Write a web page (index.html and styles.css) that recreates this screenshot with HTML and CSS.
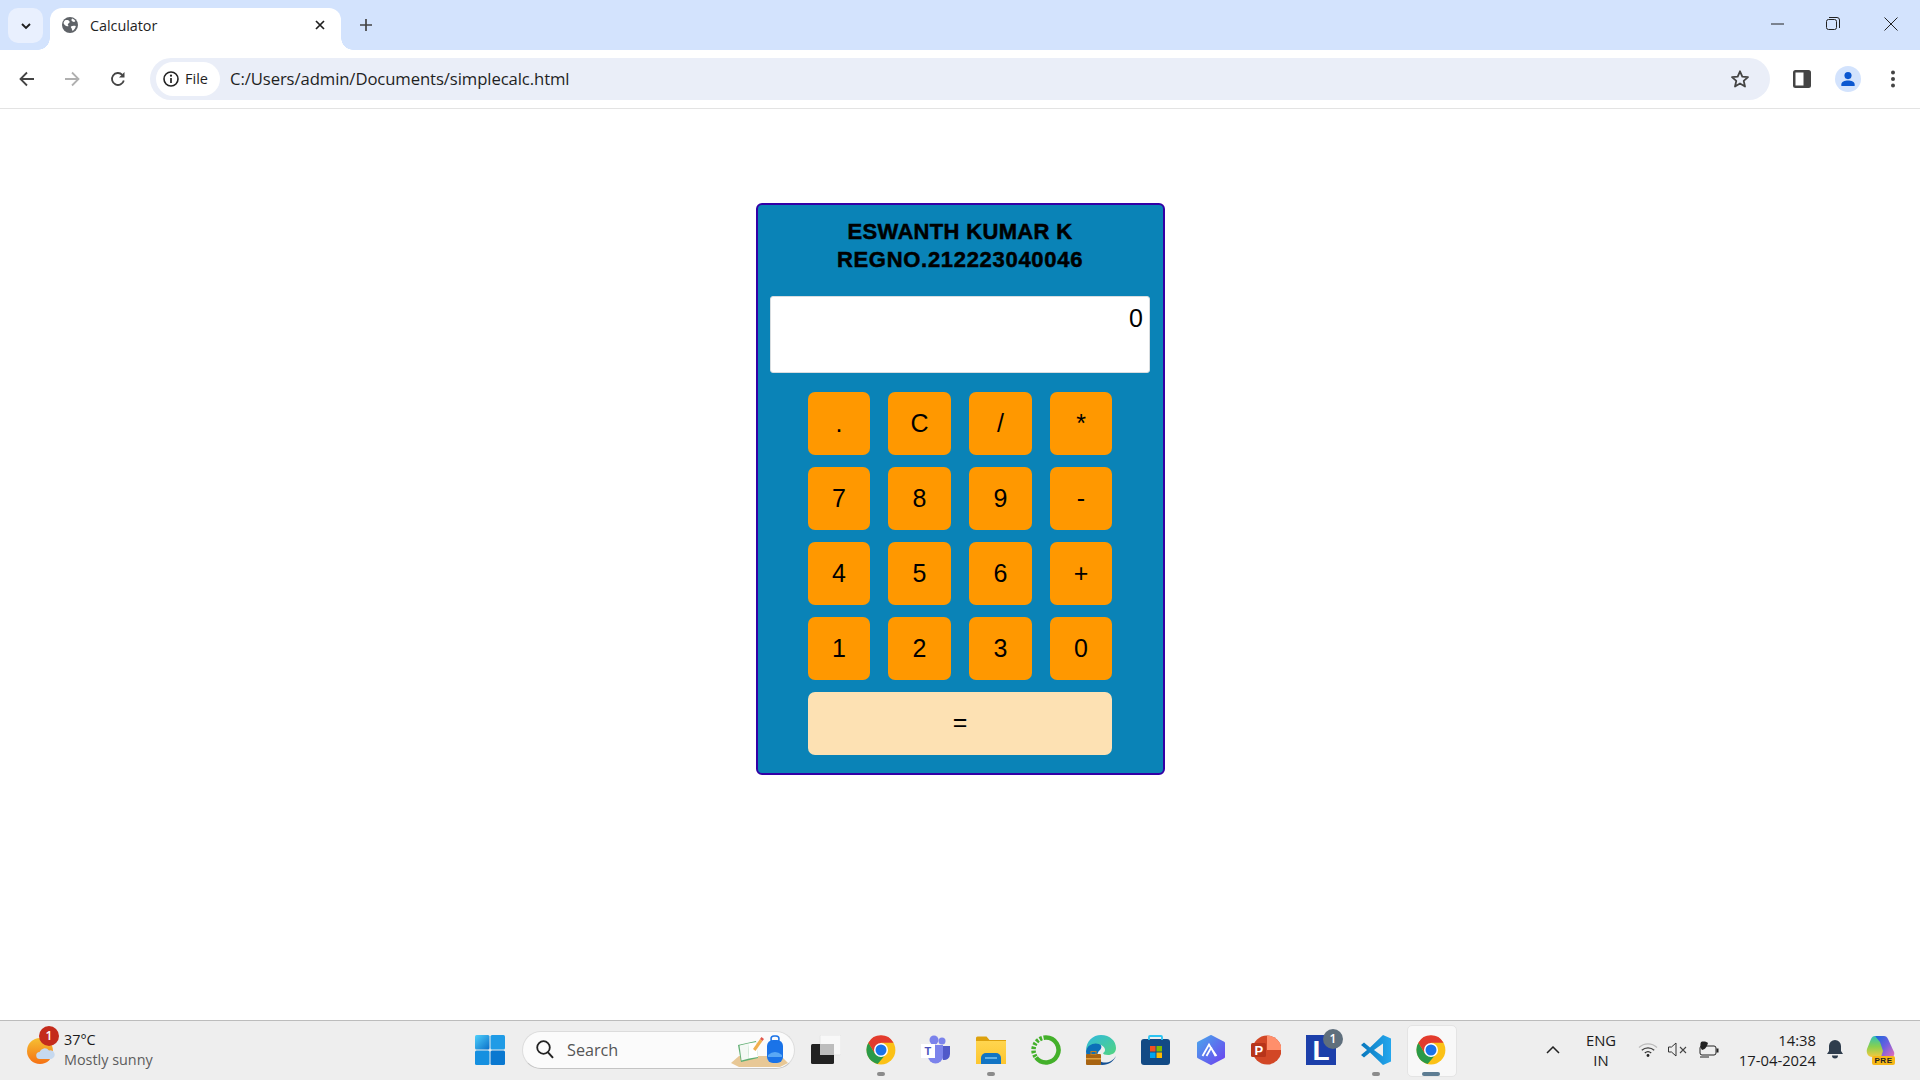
FILE: index.html
```html
<!DOCTYPE html>
<html lang="en">
<head>
<meta charset="utf-8">
<title>Calculator</title>
<link rel="stylesheet" href="styles.css">
</head>
<body>
<svg class="defs" width="0" height="0" aria-hidden="true">
  <defs>
    <symbol id="chrome" viewBox="0 0 24 24">
      <circle cx="12" cy="12" r="11.5" fill="#fbc116"/>
      <path d="M1.9 6.2 7.24 14.75 14.75 16.76 9.3 23.2A11.5 11.5 0 0 1 1.9 6.2Z" fill="#2a9a48"/>
      <path d="M1.9 6.2A11.5 11.5 0 0 1 22 6.2H12L7.24 14.75Z" fill="#e33b2e"/>
      <circle cx="12" cy="12" r="5.6" fill="#fff"/>
      <circle cx="12" cy="12" r="4.4" fill="#1a73e8"/>
    </symbol>
    <linearGradient id="gStart" x1="0" y1="0" x2="1" y2="1"><stop offset="0" stop-color="#4fd0fb"/><stop offset="1" stop-color="#0a6fc9"/></linearGradient>
    <linearGradient id="gSun" x1="0" y1="0" x2="0" y2="1"><stop offset="0" stop-color="#f6c033"/><stop offset="1" stop-color="#f57114"/></linearGradient>
    <linearGradient id="gFolder" x1="0" y1="0" x2="0" y2="1"><stop offset="0" stop-color="#ffd54f"/><stop offset="1" stop-color="#fdc62f"/></linearGradient>
    <linearGradient id="gEdge" x1="0" y1="0" x2="1" y2="1"><stop offset="0" stop-color="#2fb8e0"/><stop offset="1" stop-color="#52d57e"/></linearGradient>
    <linearGradient id="gHex" x1="0" y1="0" x2="1" y2="1"><stop offset="0" stop-color="#4aa4ec"/><stop offset="1" stop-color="#6d44ef"/></linearGradient>
    <linearGradient id="gVs" x1="0" y1="0" x2="1" y2="0"><stop offset="0" stop-color="#0a78bd"/><stop offset="1" stop-color="#24a7ee"/></linearGradient>
    <linearGradient id="gCop" x1="0" y1="0" x2="1" y2="1"><stop offset="0" stop-color="#1668dc"/><stop offset=".5" stop-color="#6f5fe0"/><stop offset="1" stop-color="#ee6fb5"/></linearGradient>
    <linearGradient id="gCop2" x1="0" y1="0" x2="0" y2="1"><stop offset="0" stop-color="#2fc2b8"/><stop offset=".5" stop-color="#88d04f"/><stop offset="1" stop-color="#f5c93f"/></linearGradient>
  </defs>
</svg>

<div class="window">
  <header class="tabstrip">
    <button class="tabsearch" aria-label="Search tabs">
      <svg width="12" height="12" viewBox="0 0 12 12"><path d="M2 4l4 4 4-4" fill="none" stroke="#1f1f1f" stroke-width="1.9"/></svg>
    </button>
    <div class="tab">
      <svg class="favicon" width="16" height="16" viewBox="0 0 16 16"><circle cx="8" cy="8" r="8" fill="#5f6368"/><path d="M3 3.2c2-.6 3.6-.3 4.4 1 .6 1 0 1.800-1 2.300-.8.400-.7 1.300-.1 1.900.5.600-.3 1.100-1 .9C3.800 9 2 7.600 1.500 6 1.700 5 2.300 3.900 3 3.200ZM10.200 1.500c1.300.4 2.500 1.400 3.200 2.500l-1.200 1c-1.300.1-1.700-.7-2.500-1.200-.5-.7-.2-1.600.5-2.300ZM9 9.500c1.200-.8 3-.8 4.800-.4-.3 2-1.400 3.700-3 4.800-.9-.5-.8-1.500-1.100-2.300-.4-.9-1.200-1.400-.7-2.100Z" fill="#fff"/></svg>
      <span class="tabtitle">Calculator</span>
      <svg class="tabclose" width="10" height="10" viewBox="0 0 10 10"><path d="M1 1l8 8M9 1l-8 8" stroke="#1f1f1f" stroke-width="1.700"/></svg>
    </div>
    <button class="newtab" aria-label="New tab">
      <svg width="14" height="14" viewBox="0 0 14 14"><path d="M7 1v12M1 7h12" stroke="#444" stroke-width="1.700"/></svg>
    </button>
    <div class="winctl">
      <svg width="14" height="14" viewBox="0 0 14 14"><path d="M0 7h13" stroke="#222" stroke-width="1"/></svg>
      <svg width="14" height="14" viewBox="0 0 14 14"><rect x=".5" y="2.500" width="10" height="10" rx="2" fill="none" stroke="#222"/><path d="M3 .5h8a2.500 2.500 0 0 1 2.500 2.500v8" fill="none" stroke="#222"/></svg>
      <svg class="winclose" width="14" height="14" viewBox="0 0 14 14"><path d="M.5.5l13 13M13.500.5l-13 13" stroke="#222"/></svg>
    </div>
  </header>

  <nav class="toolbar">
    <svg class="navicon" width="16" height="16" viewBox="0 0 16 16"><path d="M15 8H2M8 1.500 1.500 8 8 14.500" fill="none" stroke="#444" stroke-width="1.800"/></svg>
    <svg class="navicon" width="16" height="16" viewBox="0 0 16 16"><path d="M1 8h13M8 1.500 14.500 8 8 14.500" fill="none" stroke="#b0b0b0" stroke-width="1.800"/></svg>
    <svg class="navicon" width="16" height="16" viewBox="0 0 16 16"><path d="M13.800 9.500A6 6 0 1 1 12.300 3.800" fill="none" stroke="#444" stroke-width="1.800"/><path d="M14.500 1v5.500H9z" fill="#444"/></svg>
    <div class="omnibox">
      <div class="chip">
        <svg width="16" height="16" viewBox="0 0 16 16"><circle cx="8" cy="8" r="7" fill="none" stroke="#222" stroke-width="1.600"/><path d="M8 7v5" stroke="#222" stroke-width="1.700"/><circle cx="8" cy="4.700" r="1.100" fill="#222"/></svg>
        <span>File</span>
      </div>
      <span class="url">C:/Users/admin/Documents/simplecalc.html</span>
      <svg class="star" width="20" height="20" viewBox="0 0 20 20"><path d="M10 2.300l2.300 5.300 5.700.5-4.300 3.800 1.300 5.600-5-3-5 3 1.300-5.600L2 8.100l5.700-.5z" fill="none" stroke="#444" stroke-width="1.800" stroke-linejoin="round"/></svg>
    </div>
    <div class="tools">
      <svg width="18" height="18" viewBox="0 0 18 18"><rect x="0" y="0" width="18" height="18" rx="2.500" fill="#444"/><rect x="2.500" y="2.500" width="8" height="13" fill="#fff"/></svg>
      <div class="avatar"><svg width="16" height="16" viewBox="0 0 18 18"><circle cx="9" cy="5.200" r="4" fill="#0b57d0"/><path d="M1.500 17v-1.800c0-2.800 3.600-4.400 7.500-4.400s7.500 1.600 7.500 4.400V17z" fill="#0b57d0"/></svg></div>
      <svg width="6" height="18" viewBox="0 0 6 18"><circle cx="3" cy="2.500" r="2" fill="#444"/><circle cx="3" cy="9" r="2" fill="#444"/><circle cx="3" cy="15.500" r="2" fill="#444"/></svg>
    </div>
  </nav>

  <main class="page">
    <section class="calc">
      <h1 class="calc-title"><span class="name-line">ESWANTH KUMAR K</span><span class="reg-line">REGNO.212223040046</span></h1>
      <div class="display">0</div>
      <div class="keys">
        <button class="key">.</button><button class="key">C</button><button class="key">/</button><button class="key">*</button>
        <button class="key">7</button><button class="key">8</button><button class="key">9</button><button class="key">-</button>
        <button class="key">4</button><button class="key">5</button><button class="key">6</button><button class="key">+</button>
        <button class="key">1</button><button class="key">2</button><button class="key">3</button><button class="key">0</button>
        <button class="key equals">=</button>
      </div>
    </section>
  </main>

  <footer class="taskbar">
    <div class="weather">
      <div class="weather-icon">
        <svg width="28" height="26" viewBox="0 0 28 26"><circle cx="13" cy="13" r="13" fill="url(#gSun)"/><path d="M13 21a3.500 3.500 0 0 1-.5-7 5.500 5.500 0 0 1 9.500-1.500 4.300 4.300 0 0 1 2.500 8.500z" fill="#c6d9ef"/></svg>
        <span class="wbadge">1</span>
      </div>
      <div class="wtext"><span class="wtemp">37°C</span><span class="wdesc">Mostly sunny</span></div>
    </div>

    <div class="apps">
      <svg class="app" width="30" height="30" viewBox="0 0 30 30"><rect width="14.500" height="14.500" x="0" y="0" rx="1.500" fill="url(#gStart)"/><rect width="14.500" height="14.500" x="15.500" y="0" rx="1.500" fill="#1f9be6"/><rect width="14.500" height="14.500" x="0" y="15.500" rx="1.500" fill="#1590e0"/><rect width="14.500" height="14.500" x="15.500" y="15.500" rx="1.500" fill="#0a78d0"/></svg>

      <div class="search">
        <svg width="18" height="19" viewBox="0 0 18 19"><circle cx="7.500" cy="7.500" r="6.300" fill="none" stroke="#222" stroke-width="1.800"/><path d="M12 12.300l5 5.500" stroke="#222" stroke-width="2"/></svg>
        <span class="search-label">Search</span>
        <svg class="search-art" width="57" height="34" viewBox="0 0 57 34"><path d="M0 29 8 22h42l7 7-8 4H8z" fill="#e8c896"/><path d="M7 11 25 7l2 17-17 4z" fill="#5fae72"/><path d="M8.500 11.500 17 9.500l1 15-7.500 2z" fill="#f4f8f4"/><path d="M17 9.500 25.500 8l1.500 15-9 1.500z" fill="#fff"/><path d="M22 15 29 5l2.500 2-7 10z" fill="#f0b050"/><path d="M29 5l1.500-2 2.500 2-1.500 2z" fill="#e2574c"/><rect x="36" y="6" width="16" height="23" rx="6" fill="#1a73e8"/><rect x="40" y="2" width="8" height="6" rx="3" fill="none" stroke="#1a73e8" stroke-width="1.500"/><path d="M37 21q7-6 14 0v2H37z" fill="#5aa8f5"/></svg>
      </div>

      <svg class="app" width="30" height="30" viewBox="0 0 30 30"><rect x="9" y="0" width="21" height="20" rx="1.500" fill="#f8f8f8" stroke="#e6e6e6"/><rect x="0" y="9" width="23" height="20" rx="1.500" fill="#222"/><rect x="9" y="9" width="14" height="11" fill="#bdbdbd"/></svg>

      <div class="app-slot">
        <svg class="app" width="30" height="30"><use href="#chrome"/></svg>
        <i class="pip"></i>
      </div>

      <svg class="app" width="30" height="30" viewBox="0 0 30 30"><circle cx="21" cy="6" r="3.500" fill="#7b83eb"/><circle cx="13" cy="5" r="4.500" fill="#7b83eb"/><path d="M18 11h11v8a6 6 0 0 1-7 6z" fill="#5059c9"/><path d="M7 10h15v11a7.500 7.500 0 0 1-15 0z" fill="#7b83eb"/><rect x="0" y="9" width="14" height="14" fill="#fff"/><text x="3.500" y="20" class="teams-t">T</text></svg>

      <div class="app-slot">
        <svg class="app" width="30" height="30" viewBox="0 0 30 30"><path d="M0 3a1.500 1.500 0 0 1 1.500-1.500h9l3 3.500H30v3H0z" fill="#dda10d"/><path d="M0 6h30v23H0z" fill="url(#gFolder)"/><path d="M5 29v-6a5 5 0 0 1 5-5h10a5 5 0 0 1 5 5v6z" fill="#1274c4"/><path d="M9 23h12" stroke="#7cc4f0" stroke-width="1.500"/></svg>
        <i class="pip"></i>
      </div>

      <svg class="app" width="30" height="30" viewBox="0 0 30 30"><path d="M15 2.500a12.500 12.500 0 1 1-10 20" fill="none" stroke="#43b02a" stroke-width="4.500"/><path d="M15 2.500A12.500 12.500 0 0 0 5 22.500" fill="none" stroke="#43b02a" stroke-width="4.500" stroke-dasharray="2.500 1.500"/></svg>

      <svg class="app" width="30" height="30" viewBox="0 0 30 30"><path d="M0 16C0 6 7 0 15 0c9 0 15 6 15 13 0 5-4 7-8 7-3 0-5-1-5-2 3-1 3-6-2-8-6-2-13 0-15 6z" fill="url(#gEdge)"/><path d="M0 16c1-6 8-9 13-7 3 1 3 4 1 6-4 3-4 10 1 15H10C4 30 0 23 0 16z" fill="#0c6fb8"/><path d="M14 26c4 3 12 2 16-5-2 5-7 9-14 9-2 0-2-2-2-4z" fill="#124f92"/><rect x="0" y="19" width="15" height="11" rx="1" fill="#a86412"/><rect x="0" y="23" width="15" height="1.500" fill="#e2a13f"/><rect x="5" y="16.500" width="5" height="3" fill="none" stroke="#c47f1f"/></svg>

      <svg class="app" width="30" height="30" viewBox="0 0 30 30"><rect x="0" y="4" width="29" height="26" rx="3" fill="#124a85"/><path d="M8 5V2a1 1 0 0 1 1-1h11a1 1 0 0 1 1 1v3" fill="none" stroke="#2cc4f2" stroke-width="1.800"/><rect x="9" y="11" width="5.500" height="5.500" fill="#f25022"/><rect x="15.500" y="11" width="5.500" height="5.500" fill="#7fba00"/><rect x="9" y="17.500" width="5.500" height="5.500" fill="#00a4ef"/><rect x="15.500" y="17.500" width="5.500" height="5.500" fill="#ffb900"/></svg>

      <svg class="app" width="30" height="30" viewBox="0 0 30 30"><path d="M15 1.500 27.500 8v14L15 28.500 2.500 22V8z" fill="url(#gHex)" stroke="url(#gHex)" stroke-width="3" stroke-linejoin="round"/><path d="M6.500 21 13 9.500 15 13M10.500 21 15 13l5.500 8M19.500 21l-4.500-8.500" fill="none" stroke="#fff" stroke-width="1.800"/></svg>

      <svg class="app" width="30" height="30" viewBox="0 0 30 30"><circle cx="16" cy="15" r="14.500" fill="#d24726"/><path d="M16 .5A14.500 14.500 0 0 1 30.500 15H16z" fill="#ff8f6b"/><rect x="0" y="8" width="15" height="14" rx="1.500" fill="#b7341a"/><text x="3.500" y="19.500" class="ppt-t">P</text></svg>

      <div class="app-slot lapp">
        <span class="lapp-tile">L</span>
        <span class="lbadge">1</span>
      </div>

      <div class="app-slot">
        <svg class="app" width="30" height="30" viewBox="0 0 30 30"><path d="M22 0l8 3.500v23L22 30 9 17.500 3 22.500 0 20l6-5-6-5 3-2.500 6 5z" fill="url(#gVs)"/><path d="M22 8.500 13 15l9 6.500z" fill="#eee"/></svg>
        <i class="pip"></i>
      </div>

      <div class="app-slot active">
        <svg class="app" width="30" height="30"><use href="#chrome"/></svg>
        <i class="pip wide"></i>
      </div>
    </div>

    <div class="tray">
      <svg class="tray-up" width="14" height="8" viewBox="0 0 14 8"><path d="M1 7l6-6 6 6" fill="none" stroke="#222" stroke-width="1.500"/></svg>
      <div class="lang"><span>ENG</span><span>IN</span></div>
      <div class="status">
        <svg width="20" height="15" viewBox="0 0 20 15"><path d="M1 5.500a13 13 0 0 1 18 0" fill="none" stroke="#bbb" stroke-width="1.300"/><path d="M3.800 8.300a9 9 0 0 1 12.400 0" fill="none" stroke="#444" stroke-width="1.300"/><path d="M6.800 11a5 5 0 0 1 6.400 0" fill="none" stroke="#333" stroke-width="1.300"/><circle cx="10" cy="13.500" r="1.400" fill="#222"/></svg>
        <svg width="19" height="15" viewBox="0 0 19 15"><path d="M.5 5h3l4.500-4v13L3.500 10h-3z" fill="none" stroke="#333"/><path d="M12 5l6 6M18 5l-6 6" stroke="#444" stroke-width="1.100"/></svg>
        <svg class="battery" width="20" height="17" viewBox="0 0 20 17"><rect x="1" y="5" width="16" height="9" rx="2" fill="none" stroke="#222"/><rect x="17.500" y="7.500" width="2" height="4" fill="#222"/><path d="M2 1c3-1 6 0 7 1-1 3-2 6-6 7C1 7 1 3 2 1z" fill="#222"/><path d="M1 16h9" stroke="#222"/></svg>
      </div>
      <div class="clock"><span>14:38</span><span>17-04-2024</span></div>
      <svg class="bell" width="16" height="19" viewBox="0 0 16 19"><path d="M8 0a6 6 0 0 1 6 6v5l2 3H0l2-3V6a6 6 0 0 1 6-6z" fill="#2f3d4d"/><path d="M5 15.500h6a3 3 0 0 1-6 0z" fill="#2f3d4d"/></svg>
      <div class="copilot">
        <svg width="29" height="24" viewBox="0 0 29 24"><path d="M9 1h9c2 0 3 1 4 3l6 13c1 3-1 6-4 6H14z" fill="url(#gCop)"/><path d="M9 1c-2 0-3 1-4 3L1 14c-1 4 1 8 5 8h9l2-6-3-9z" fill="url(#gCop2)"/></svg>
        <span class="pre">PRE</span>
      </div>
    </div>
  </footer>
</div>
</body>
</html>
```
FILE: styles.css
```css
* { box-sizing: border-box; }
html, body { margin: 0; height: 100%; }
body { font-family: "Open Sans", "Noto Sans", sans-serif; background: #fff; color: #1f1f1f; overflow: hidden; }
.defs { position: absolute; }
button { border: 0; padding: 0; background: none; font: inherit; color: inherit; }
svg { display: block; flex: none; }

.window { height: 1080px; display: flex; flex-direction: column; }

/* Tab strip */
.tabstrip { height: 50px; flex: none; background: #d3e3fd; display: flex; align-items: flex-start; padding-left: 8px; }
.tabsearch { width: 35px; height: 35px; margin-top: 8px; border-radius: 10px; background: #e9f0fe; display: flex; align-items: center; justify-content: center; }
.tab { width: 291px; height: 42px; margin: 8px 0 0 7px; background: #fff; border-radius: 12px 12px 0 0; display: flex; align-items: center; padding: 0 16px 8px 12px; position: relative; }
.tab::before, .tab::after { content: ""; position: absolute; bottom: 0; width: 12px; height: 12px; }
.tab::before { left: -12px; background: radial-gradient(circle at 0 0, transparent 11.500px, #fff 12px); }
.tab::after { right: -12px; background: radial-gradient(circle at 100% 0, transparent 11.500px, #fff 12px); }
.tabtitle { font-size: 14.400px; margin-left: 12px; flex: 1; letter-spacing: -.05px; }
.newtab { width: 24px; height: 24px; margin: 13px 0 0 13px; display: flex; align-items: center; justify-content: center; }
.winctl { margin-left: auto; display: flex; gap: 41px; height: 48px; align-items: center; padding-right: 22px; }
.winclose { margin-left: 3px; }

/* Toolbar */
.toolbar { height: 59px; flex: none; background: #fff; border-bottom: 1px solid #e3e3e3; display: flex; align-items: center; padding: 0 0 1px 19px; }
.navicon { margin-right: 29px; }
.navicon:nth-child(2) { margin-right: 30px; }
.navicon:nth-child(3) { margin-right: 24px; }
.omnibox { width: 1620px; height: 42px; border-radius: 21px; background: #eaeef8; display: flex; align-items: center; padding: 0 20px 0 6px; }
.chip { width: 64px; height: 34px; border-radius: 17px; background: #fff; display: flex; align-items: center; gap: 6px; padding-left: 7px; font-size: 14.500px; }
.url { font-size: 16.700px; margin-left: 10px; flex: 1; letter-spacing: -.1px; color: #1f1f1f; }
.tools { flex: 1; display: flex; align-items: center; padding-left: 23px; gap: 24px; }
.avatar { width: 26px; height: 26px; border-radius: 50%; background: #d3e3fd; display: flex; align-items: center; justify-content: center; margin-right: 5px; }

/* Calculator */
.page { flex: 1; min-height: 0; display: flex; justify-content: center; align-items: flex-start; padding-top: 94px; }
.calc { width: 409px; height: 572px; background: #0a83b7; border: 2px solid #3300a6; border-radius: 6px; padding-top: 13px; font-family: "Liberation Sans", Arial, sans-serif; color: #000; }
.calc-title { margin: 0; text-align: center; font-size: 22px; line-height: 28px; font-weight: 700; -webkit-text-stroke: .5px #000; }
.name-line, .reg-line { display: block; }
.name-line { letter-spacing: .33px; }
.reg-line { letter-spacing: .7px; }
.display { width: 380px; height: 77px; margin: 22px auto 19px; background: #fff; border: 1px solid #d8dde0; border-radius: 3px; text-align: right; font-size: 25px; line-height: 29px; padding: 7px 6px 0 0; }
.keys { width: 304px; margin: 0 auto; display: grid; grid-template-columns: 62px 63px 63px 62px; column-gap: 18px; row-gap: 12px; }
.key { height: 63px; background: #ff9800; border-radius: 7px; font-family: "Liberation Sans", Arial, sans-serif; font-size: 25px; color: #000; }
.equals { grid-column: 1 / -1; background: #fde1b3; padding-bottom: 3px; }

/* Taskbar */
.taskbar { height: 60px; flex: none; background: #eeeeee; border-top: 1px solid #bcbcbc; display: flex; align-items: center; padding: 0 0 2px 27px; position: relative; }
.weather { width: 448px; flex: none; display: flex; align-items: center; gap: 9px; }
.weather-icon { width: 28px; height: 26px; position: relative; margin-top: 2px; }
.wbadge { position: absolute; left: 12px; top: -12px; width: 20px; height: 20px; border-radius: 50%; background: #c42b1c; color: #fff; font-size: 12px; font-weight: 600; display: flex; align-items: center; justify-content: center; }
.wtext { display: flex; flex-direction: column; font-size: 14.400px; line-height: 20px; }
.wtemp { color: #1a1a1a; }
.wdesc { color: #5c5c5c; }

.apps { display: flex; align-items: center; gap: 25px; width: 971px; flex: none; }
.search { width: 273px; height: 38px; margin: 0 -9px 0 -8px; border-radius: 19px; background: #fbfbfb; border: 1px solid #dcdcdc; border-bottom-color: #c4c4c4; display: flex; align-items: center; padding-left: 13px; position: relative; }
.search-label { font-size: 16.200px; color: #555; margin-left: 13px; }
.search-art { position: absolute; right: 6px; top: 2px; }
.app-slot { width: 30px; height: 30px; position: relative; flex: none; }
.pip { position: absolute; left: 11px; top: 37px; width: 8px; height: 4px; border-radius: 2px; background: #8b8b8b; }
.pip.wide { left: 6px; width: 18px; background: #5d7c92; }
.active::before { content: ""; position: absolute; left: -9px; top: -10px; width: 48px; height: 50px; background: #f8f8f8; border: 1px solid #e4e4e4; border-radius: 5px; }
.active .app { position: relative; }
.teams-t { font: 700 11px "Liberation Sans", sans-serif; fill: #4b53bc; }
.ppt-t { font: 700 13px "Liberation Sans", sans-serif; fill: #fff; }
.lapp-tile { display: block; width: 30px; height: 30px; background: #1c3faa; color: #fff; font: 700 28px/32px "Liberation Sans", sans-serif; text-align: center; }
.lbadge { position: absolute; right: -7px; top: -6px; width: 20px; height: 20px; border-radius: 50%; background: #5f6f7d; color: #fff; font-size: 12px; font-weight: 600; display: flex; align-items: center; justify-content: center; }

.tray { flex: 1; display: flex; align-items: center; font-size: 14.800px; color: #1c1c1c; }
.tray-up { margin-left: 100px; }
.lang { width: 40px; margin-left: 21px; display: flex; flex-direction: column; align-items: center; line-height: 20px; }
.status { display: flex; align-items: center; gap: 10px; margin-left: 17px; }
.battery { margin-left: 2px; }
.clock { width: 97px; display: flex; flex-direction: column; align-items: flex-end; line-height: 20px; }
.bell { margin-left: 11px; }
.copilot { width: 29px; height: 30px; margin-left: 23px; position: relative; }
.pre { position: absolute; left: 6px; bottom: 0; width: 23px; height: 9px; border-radius: 2px; background: #f6b818; color: #222; font: 700 8px/9px "Liberation Sans", sans-serif; text-align: center; letter-spacing: .5px; }
```
